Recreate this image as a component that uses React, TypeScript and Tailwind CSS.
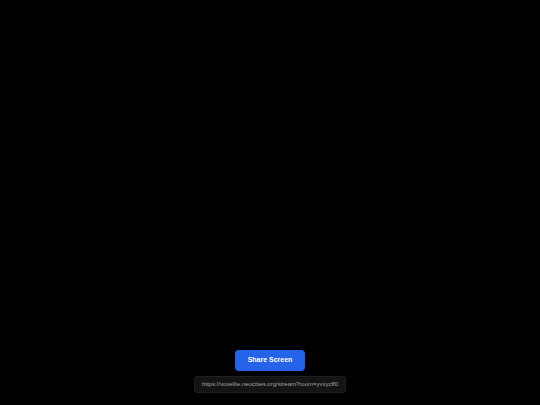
export default function App() {
  return (
    <div className="flex h-[405px] w-full flex-col items-center justify-end bg-black pb-[12px] font-['Liberation_Sans',Arial,sans-serif]">
      <button className="h-[21px] w-[70px] rounded-[4px] bg-[#2563eb] text-[7px] font-bold text-white">
        Share Screen
      </button>
      <div className="mt-[5px] flex h-[17px] w-[152px] items-center justify-center rounded-[3px] border border-[#1f1f1f] bg-[#141414] text-[6px] text-[#a3a3a3]">
        https://voxelite.neocities.org/stream?room=yvvycff0
      </div>
    </div>
  );
}
